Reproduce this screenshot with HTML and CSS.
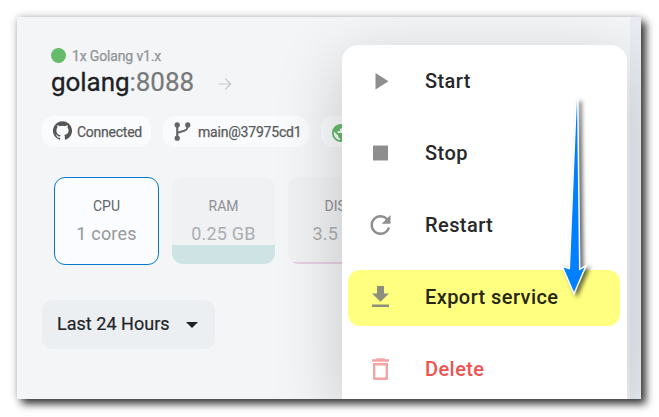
FILE: index.html
```
<!DOCTYPE html>
<html lang="en">
<head>
<meta charset="utf-8">
<title>Service</title>
<link rel="stylesheet" href="styles.css">
</head>
<body>
<main class="window">
  <section class="service">
    <div class="status"><span class="dot"></span><span class="runtime">1x Golang v1.x</span></div>
    <h1 class="title"><span><span class="name">golang</span>:8088</span>
      <svg class="go" viewBox="0 0 14 14"><path d="M.5 7h12M7.3 1.5 12.8 7l-5.5 5.5"/></svg>
    </h1>
    <div class="chips">
      <div class="chip connected">
        <svg class="github" viewBox="0 0 24 24"><path d="M12 .3a12 12 0 0 0-3.8 23.4c.6.1.8-.3.8-.6v-2c-3.3.7-4-1.6-4-1.6-.6-1.4-1.4-1.8-1.4-1.8-1-.7.1-.7.1-.7 1.2 0 1.9 1.2 1.9 1.2 1 1.8 2.8 1.3 3.5 1 0-.8.4-1.3.7-1.6-2.7-.3-5.5-1.3-5.5-6 0-1.2.5-2.3 1.3-3.1-.2-.4-.6-1.6 0-3.2 0 0 1-.3 3.4 1.2a11.5 11.5 0 0 1 6 0c2.3-1.5 3.3-1.2 3.3-1.2.6 1.6.2 2.8 0 3.2.9.8 1.3 1.9 1.3 3.2 0 4.6-2.8 5.6-5.5 5.9.5.4.9 1 .9 2.2v3.3c0 .3.1.7.8.6A12 12 0 0 0 12 .3"/></svg>
        <span class="chip-text">Connected</span>
      </div>
      <div class="chip branch">
        <svg class="fork" viewBox="0 0 16 18"><path d="M3 3v12M13 3c0 6-4 5-10 7.500" fill="none" stroke="#666" stroke-width="2"/><circle cx="3" cy="2.800" r="2.500"/><circle cx="13" cy="2.800" r="2.500"/><circle cx="3" cy="15.300" r="2.500"/></svg>
        <span class="chip-text">main@37975cd1</span>
      </div>
      <div class="chip public">
        <svg class="globe" viewBox="2 2 20 20"><path d="M12 2C6.480 2 2 6.480 2 12s4.480 10 10 10 10-4.480 10-10S17.520 2 12 2zm-1 17.930c-3.950-.49-7-3.850-7-7.930 0-.62.080-1.210.210-1.790L9 15v1c0 1.100.9 2 2 2v1.930zm6.900-2.540c-.26-.81-1-1.390-1.900-1.390h-1v-3c0-.55-.45-1-1-1H8v-2h2c.55 0 1-.45 1-1V7h2c1.100 0 2-.9 2-2v-.41c2.930 1.190 5 4.060 5 7.410 0 2.080-.8 3.970-2.100 5.390z"/></svg>
        <span class="chip-text">Public</span>
      </div>
    </div>
    <div class="cards">
      <div class="card selected"><span class="label">CPU</span><span class="value">1 cores</span></div>
      <div class="card ram"><span class="label">RAM</span><span class="value">0.25 GB</span></div>
      <div class="card disk"><span class="label">DISK</span><span class="value">3.5 GB</span></div>
    </div>
    <div class="select"><span>Last 24 Hours</span><svg class="caret" viewBox="0 0 12 6"><path d="M0 0h12L6 6z"/></svg></div>
  </section>
  <div class="gutter"></div>
  <nav class="menu">
    <div class="item"><svg class="icon" viewBox="0 0 24 24"><path d="M7.500 4v16.500l13-8.250z"/></svg><span>Start</span></div>
    <div class="item"><svg class="icon" viewBox="0 0 24 24"><path d="M5 4.500h15v15H5z"/></svg><span>Stop</span></div>
    <div class="item"><svg class="icon restart" viewBox="0 0 24 24"><path d="M17.650 6.350A7.958 7.958 0 0 0 12 4c-4.420 0-7.990 3.580-7.990 8s3.570 8 7.990 8c3.730 0 6.840-2.550 7.730-6h-2.080A5.990 5.990 0 0 1 12 18c-3.310 0-6-2.690-6-6s2.690-6 6-6c1.660 0 3.140.69 4.220 1.780L13 11h7V4l-2.350 2.350z"/></svg><span>Restart</span></div>
    <div class="item active"><svg class="icon" viewBox="0 0 24 24"><path d="M21 9.500h-5V2H9v7.500H4l8.500 8.200zM4 20.400v2.600h17v-2.600z"/></svg><span>Export service</span></div>
    <div class="item danger"><svg class="icon" viewBox="0 0 24 24"><path fill-rule="evenodd" d="M5 6v15.500Q5 23 6.500 23h12q1.500 0 1.500-1.500V6zm2.400 2.400h10.200v12.200H7.400zM8.700 1.200h7.600l1 1h3.700v2.600H4V2.200h3.700z"/></svg><span>Delete</span></div>
  </nav>
  <svg class="pointer" viewBox="0 0 40 220"><path d="M17 9 10 179.500 3.500 177.500 14 202 24.500 177.500 19 180.500z"/></svg>
</main>
</body>
</html>
```

FILE: styles.css
```
* { box-sizing: border-box; }
body {
  margin: 0;
  padding: 17px 18px 18px 17px;
  background: #fff;
  font-family: Roboto, sans-serif;
  overflow: hidden;
}
svg { display: block; flex: none; }
.window {
  position: relative;
  display: flex;
  width: 624px;
  height: 382px;
  background: #f3f5f7;
  box-shadow: 5px 5px 8px rgba(0,0,0,.75), 0 0 8px rgba(0,0,0,.22);
}
.service {
  width: 613px;
  padding: 30px 0 0 25px;
  overflow: hidden;
  white-space: nowrap;
}
.gutter { width: 11px; background: #e9edf3; }
.status {
  display: flex;
  align-items: center;
  gap: 6px;
  height: 17px;
  padding-left: 9px;
}
.dot { width: 15px; height: 15px; border-radius: 50%; background: #66bb6a; }
.runtime { font-size: 14px; color: #929394; letter-spacing: -.15px; -webkit-text-stroke: .25px #929394; }
.title {
  display: flex;
  align-items: center;
  gap: 24px;
  height: 36px;
  margin: 0;
  padding-left: 9px;
  font-size: 26px;
  font-weight: 400;
  color: #77787a;
  letter-spacing: -.05px;
  -webkit-text-stroke: .2px #77787a;
}
.name { color: #202124; -webkit-text-stroke: .3px #202124; }
.go { width: 14px; height: 14px; margin-top: 4px; fill: none; stroke: #c8c9ca; stroke-width: 1.2; }
.chips { display: flex; gap: 12px; margin-top: 16px; }
.chip {
  display: flex;
  align-items: center;
  height: 31px;
  border-radius: 12px;
  background: #fafbfc;
  color: #5b5b5c;
  font-size: 14px;
  letter-spacing: -.2px;
  -webkit-text-stroke: .25px #5b5b5c;
}
.connected { width: 109px; padding-left: 11px; gap: 5px; }
.connected .chip-text { letter-spacing: -.25px; }
.branch { width: 146px; padding-left: 11px; gap: 7px; }
.public { width: 100px; padding-left: 11px; gap: 6px; }
.github { width: 19px; height: 19px; fill: #555; margin-top: -2px; }
.fork { width: 17px; height: 19px; fill: #666; }
.globe { width: 18px; height: 18px; fill: #66bb6a; margin-top: 2px; }
.cards { display: flex; gap: 13px; margin: 30px 0 0 12px; }
.card {
  display: flex;
  flex-direction: column;
  align-items: center;
  width: 103px;
  height: 87px;
  padding-top: 20px;
  border-radius: 11px;
  background: #f0f1f3;
  color: #acadaf;
}
.card.selected {
  width: 105px;
  height: 88px;
  padding-top: 19px;
  border: 1px solid #0878cc;
  background: #fafcff;
  color: #979899;
}
.label { font-size: 14px; line-height: 18px; color: #8f9092; }
.selected .label { color: #646567; }
.value { margin-top: 8px; font-size: 18px; line-height: 22px; letter-spacing: .2px; }
.card.ram { background: linear-gradient(#f0f1f3 68px, #cde3e4 68px); }
.card.disk { background: linear-gradient(#f0f1f3 85px, #e5cfe0 85px); }
.select {
  display: flex;
  align-items: center;
  gap: 16px;
  width: 173px;
  height: 49px;
  margin-top: 35px;
  padding: 0 0 2px 15px;
  border-radius: 10px;
  background: #ebeff2;
  color: #242526;
  font-size: 18px;
  letter-spacing: .03px;
  -webkit-text-stroke: .2px #242526;
}
.caret { width: 12px; height: 6px; margin-top: 2px; fill: #202124; }
.menu {
  position: absolute;
  left: 325px;
  top: 28px;
  width: 285px;
  height: 354px;
  padding: 8px 7px 0 6px;
  border-radius: 16px 16px 0 0;
  background: #fff;
  box-shadow: 0 18px 66px 2px rgba(0,0,0,.18);
  clip-path: inset(-28px -14px 0 -325px);
}
.item {
  display: flex;
  align-items: center;
  gap: 33px;
  height: 56px;
  margin-bottom: 16px;
  padding-left: 20px;
  border-radius: 12px;
  color: #27282a;
  font-size: 20px;
  font-weight: 500;
  letter-spacing: .42px;
}
.icon { width: 24px; height: 24px; fill: #8e8e8e; }
.restart { transform: translateX(.5px) scale(1.25); }
.item.active {
  margin: 17px 0 15px;
  padding-bottom: 2px;
  background: #ffff80;
  color: #252610;
}
.active .icon { fill: #8d8e7d; margin-top: -2px; }
.danger { color: #ef5350; }
.danger .icon { fill: #f6a4a3; }
.danger span { padding-bottom: 1px; }
.pointer {
  position: absolute;
  left: 543px;
  top: 73px;
  width: 40px;
  height: 220px;
  fill: #0080ff;
  stroke: #fff;
  stroke-width: 3;
  paint-order: stroke;
  filter: drop-shadow(3px 2px 2px rgba(0,0,0,.6));
}
```
